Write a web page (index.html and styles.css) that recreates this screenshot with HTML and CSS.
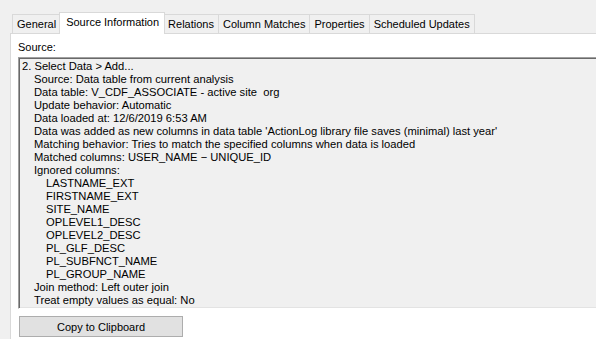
FILE: index.html
```html
<!DOCTYPE html>
<html>
<head>
<meta charset="utf-8">
<link rel="stylesheet" href="styles.css">
</head>
<body>
<div class="window">
  <div class="tabs">
    <div class="tab">General</div>
    <div class="tab active">Source Information</div>
    <div class="tab">Relations</div>
    <div class="tab">Column Matches</div>
    <div class="tab">Properties</div>
    <div class="tab">Scheduled Updates</div>
  </div>
  <div class="panel">
    <div class="label">Source:</div>
    <div class="textbox">
      <div class="l0">2. Select Data &gt; Add...</div>
      <div class="l1">Source: Data table from current analysis</div>
      <div class="l1">Data table: V_CDF_ASSOCIATE - active site&nbsp; org</div>
      <div class="l1">Update behavior: Automatic</div>
      <div class="l1">Data loaded at: 12/6/2019 6:53 AM</div>
      <div class="l1">Data was added as new columns in data table 'ActionLog library file saves (minimal) last year'</div>
      <div class="l1">Matching behavior: Tries to match the specified columns when data is loaded</div>
      <div class="l1">Matched columns: USER_NAME &minus; UNIQUE_ID</div>
      <div class="l1">Ignored columns:</div>
      <div class="l2">LASTNAME_EXT</div>
      <div class="l2">FIRSTNAME_EXT</div>
      <div class="l2">SITE_NAME</div>
      <div class="l2">OPLEVEL1_DESC</div>
      <div class="l2">OPLEVEL2_DESC</div>
      <div class="l2">PL_GLF_DESC</div>
      <div class="l2">PL_SUBFNCT_NAME</div>
      <div class="l2">PL_GROUP_NAME</div>
      <div class="l1">Join method: Left outer join</div>
      <div class="l1">Treat empty values as equal: No</div>
    </div>
    <div class="actions">
      <button class="btn">Copy to Clipboard</button>
    </div>
  </div>
</div>
</body>
</html>
```

FILE: styles.css
```css
html, body {
  margin: 0;
  padding: 0;
  background: #f0f0f0;
  overflow: hidden;
}
body {
  width: 596px;
  height: 339px;
  font-family: "Liberation Sans", Arial, sans-serif;
  font-size: 11px;
  color: #000;
}
.window {
  display: flex;
  flex-direction: column;
  padding-top: 14px;
}
.tabs {
  display: flex;
  align-items: flex-end;
  padding-left: 12px;
  height: 19px;
  position: relative;
  z-index: 1;
}
.tab {
  height: 18px;
  line-height: 18px;
  padding: 0 4px;
  border: 1px solid #d9d9d9;
  border-bottom: none;
  border-left: none;
  background: #f0f0f0;
  white-space: nowrap;
}
.tab:first-child {
  border-left: 1px solid #d9d9d9;
}
.tab.active {
  height: 21px;
  line-height: 18px;
  margin: 0 -1px -1px -2px;
  padding: 0 5px 0 6px;
  border-left: 1px solid #d9d9d9;
  background: #fff;
  position: relative;
  z-index: 2;
}
.panel {
  margin-left: 10px;
  width: 640px;
  height: 320px;
  background: #fff;
  border: 1px solid #d9d9d9;
  padding: 7px 0 0 7px;
  box-sizing: border-box;
}
.label {
  line-height: 13px;
  height: 16px;
}
.textbox {
  width: 620px;
  height: 252px;
  box-sizing: border-box;
  background: #f0f0f0;
  border-top: 1px solid #a0a0a0;
  border-left: 1px solid #a0a0a0;
  border-bottom: 1px solid #fff;
  box-shadow: inset 1px 1px 0 #696969, inset 0 -1px 0 #e3e3e3;
  padding: 2px 0 0 3px;
  font-size: 11.2px;
  line-height: 13px;
  white-space: nowrap;
}
.l1 { padding-left: 12px; }
.l2 { padding-left: 24px; }
.actions {
  display: flex;
  padding: 7px 0 0 1px;
}
.btn {
  width: 164px;
  height: 21px;
  background: #e1e1e1;
  border: 1px solid #adadad;
  border-radius: 0;
  font-family: "Liberation Sans", Arial, sans-serif;
  font-size: 11px;
  color: #000;
  padding: 0;
  margin: 0;
}
```
